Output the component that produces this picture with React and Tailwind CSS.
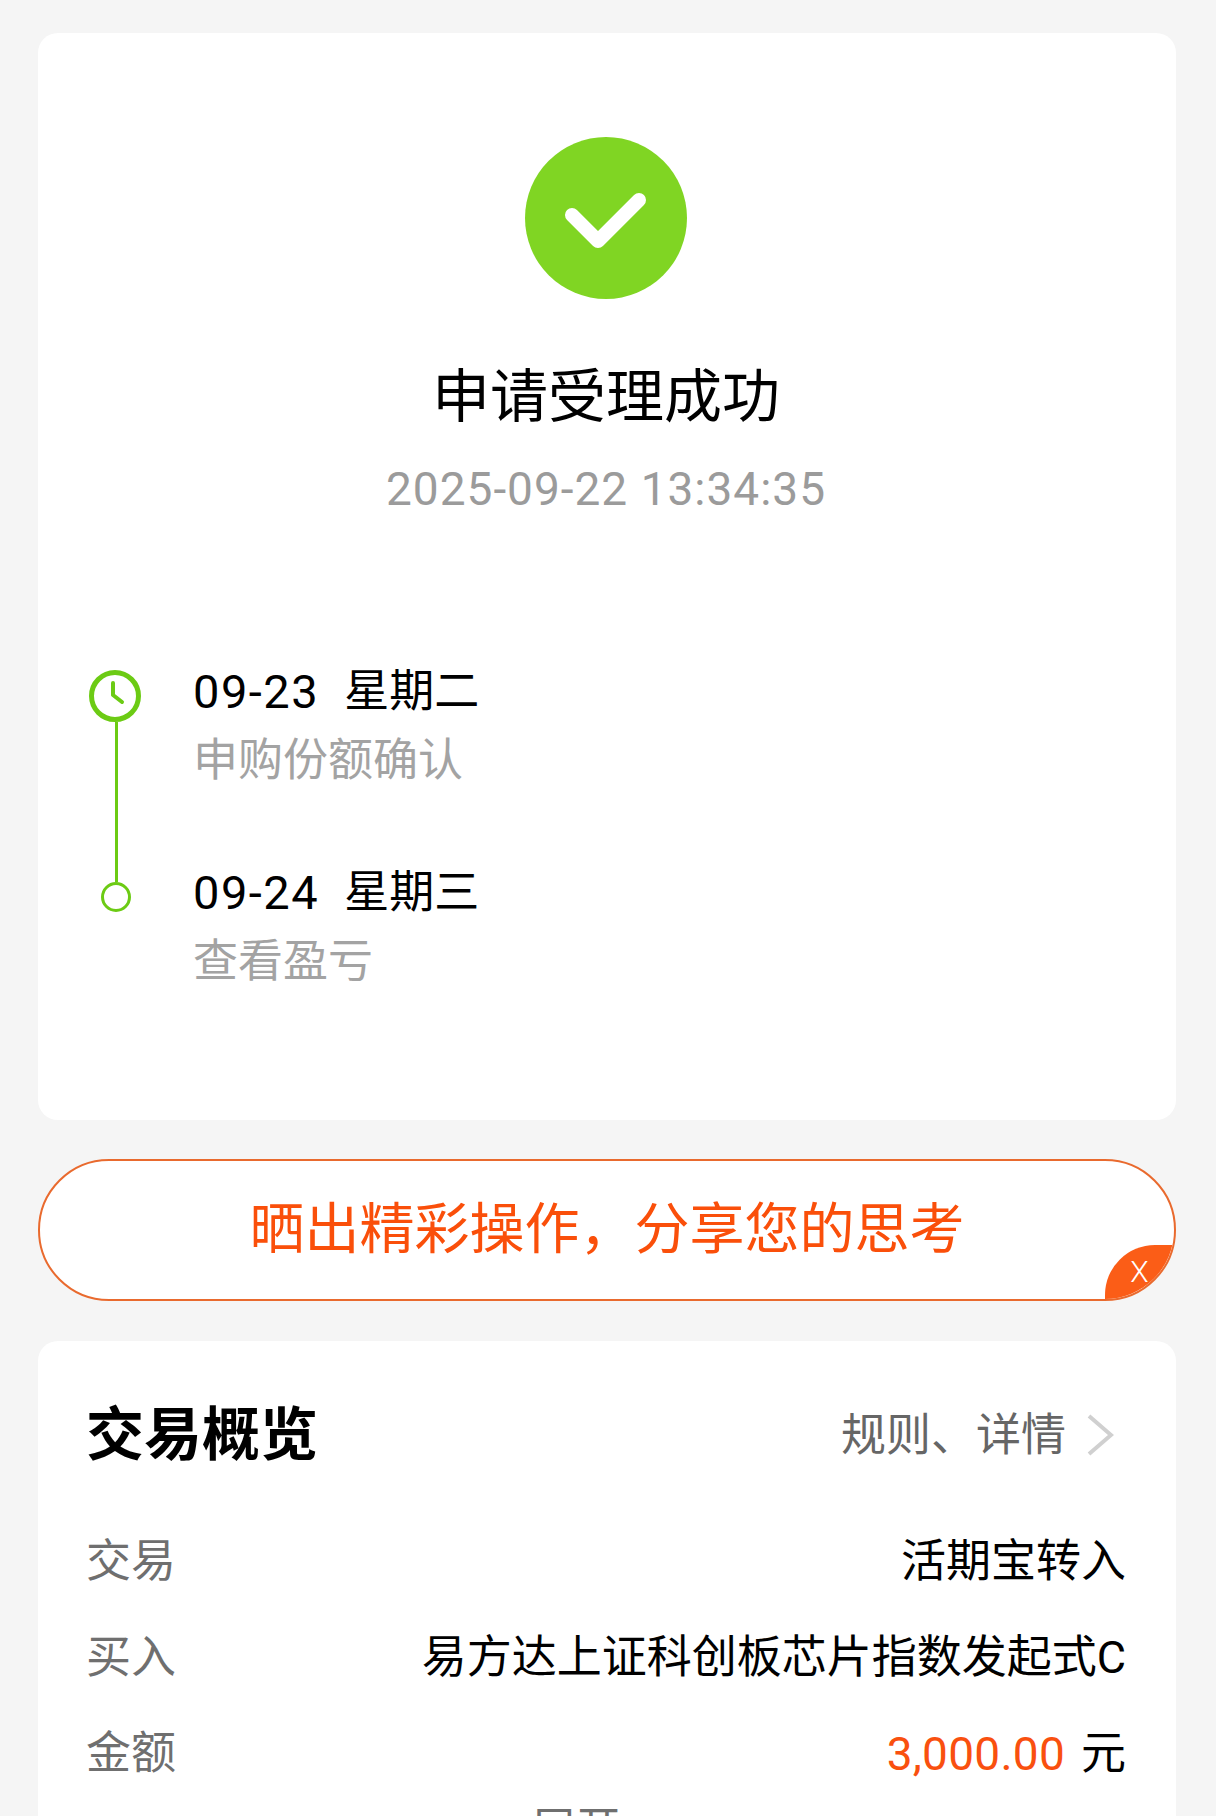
export default function App() {
  return (
    <div className="h-[1816px] overflow-hidden bg-[#f5f5f5] pl-[38px] pr-[40px] pt-[33px] font-['Roboto','Noto_Sans_CJK_SC',sans-serif]">
      <section className="h-[1087px] rounded-[20px] bg-white pt-[104px]">
        <div className="flex flex-col items-center pr-[2px]">
          <svg width="162" height="162" viewBox="0 0 162 162" className="block">
            <circle cx="81" cy="81" r="81" fill="#80d523" />
            <path d="M47 78 L73 104 L114 63" fill="none" stroke="#fff" strokeWidth="14" strokeLinecap="round" strokeLinejoin="round" />
          </svg>
          <h1 className="mt-[63px] text-[58px] leading-[70px] font-normal text-black">申请受理成功</h1>
          <p className="mt-[30px] text-[46px] leading-[54px] tracking-[1px] text-[#9b9b9b]">2025-09-22 13:34:35</p>
        </div>
        <div className="mt-[148px] flex pl-[51px]">
          <div className="flex w-[52px] flex-col items-center pt-[6px]">
            <svg width="52" height="52" viewBox="0 0 52 52" className="block shrink-0">
              <circle cx="26" cy="26" r="23.5" fill="none" stroke="#6ccb14" strokeWidth="5" />
              <path d="M24 13 V25 L33 32" fill="none" stroke="#6ccb14" strokeWidth="4" strokeLinecap="round" strokeLinejoin="round" />
            </svg>
            <div className="ml-[2px] h-[160px] w-[3px] bg-[#6ccb14]" />
            <div className="ml-[2px] h-[30px] w-[30px] rounded-full border-[3px] border-[#6ccb14]" />
          </div>
          <div className="ml-[52px]">
            <div className="flex items-center text-[45px] leading-[56px] text-black"><span className="text-[47px] tracking-[1.5px]">09-23</span><span className="ml-[25px]">星期二</span></div>
            <div className="mt-[13px] text-[45px] leading-[56px] text-[#a3a3a3]">申购份额确认</div>
            <div className="mt-[76px] flex items-center text-[45px] leading-[56px] text-black"><span className="text-[47px] tracking-[1.5px]">09-24</span><span className="ml-[25px]">星期三</span></div>
            <div className="mt-[13px] text-[45px] leading-[56px] text-[#a3a3a3]">查看盈亏</div>
          </div>
        </div>
      </section>
      <div className="relative mt-[39px] flex h-[142px] items-center justify-center overflow-hidden rounded-full border-[2px] border-[#e96a2e] bg-white">
        <span className="-mt-[2px] text-[55px] leading-none text-[#fa4f0a]">晒出精彩操作，分享您的思考</span>
        <span className="absolute bottom-0 right-0 flex h-[54px] w-[69px] items-center justify-center rounded-tl-[50px] bg-[#fb5d17] text-[30px] leading-none font-light text-white">X</span>
      </div>
      <section className="mt-[40px] h-[600px] rounded-[20px] bg-white pl-[48px] pr-[50px] pt-[59px]">
        <div className="flex items-center justify-between">
          <h2 className="text-[58px] leading-[70px] font-bold text-black">交易概览</h2>
          <div className="flex items-center pr-[12px]">
            <span className="text-[45px] leading-none text-[#666666]">规则、详情</span>
            <svg width="28" height="44" viewBox="0 0 28 44" className="ml-[20px] block">
              <path d="M3 3 L25 22 L3 41" fill="none" stroke="#d0d0d0" strokeWidth="4" />
            </svg>
          </div>
        </div>
        <div className="mt-[64px] flex items-center justify-between text-[45px] leading-[56px]">
          <span className="text-[#6f6f6f]">交易</span><span className="text-black">活期宝转入</span>
        </div>
        <div className="mt-[40px] flex items-center justify-between text-[45px] leading-[56px]">
          <span className="text-[#6f6f6f]">买入</span><span className="text-black">易方达上证科创板芯片指数发起式C</span>
        </div>
        <div className="mt-[40px] flex items-center justify-between text-[45px] leading-[56px]">
          <span className="text-[#6f6f6f]">金额</span>
          <span className="flex items-center text-black"><span className="text-[46px] tracking-[0.25px] text-[#f9500f]">3,000.00</span><span className="ml-[16px]">元</span></span>
        </div>
        <div className="mt-[20px] pl-[445px] text-[45px] leading-[56px] text-[#6f6f6f]">展开</div>
      </section>
    </div>
  );
}
